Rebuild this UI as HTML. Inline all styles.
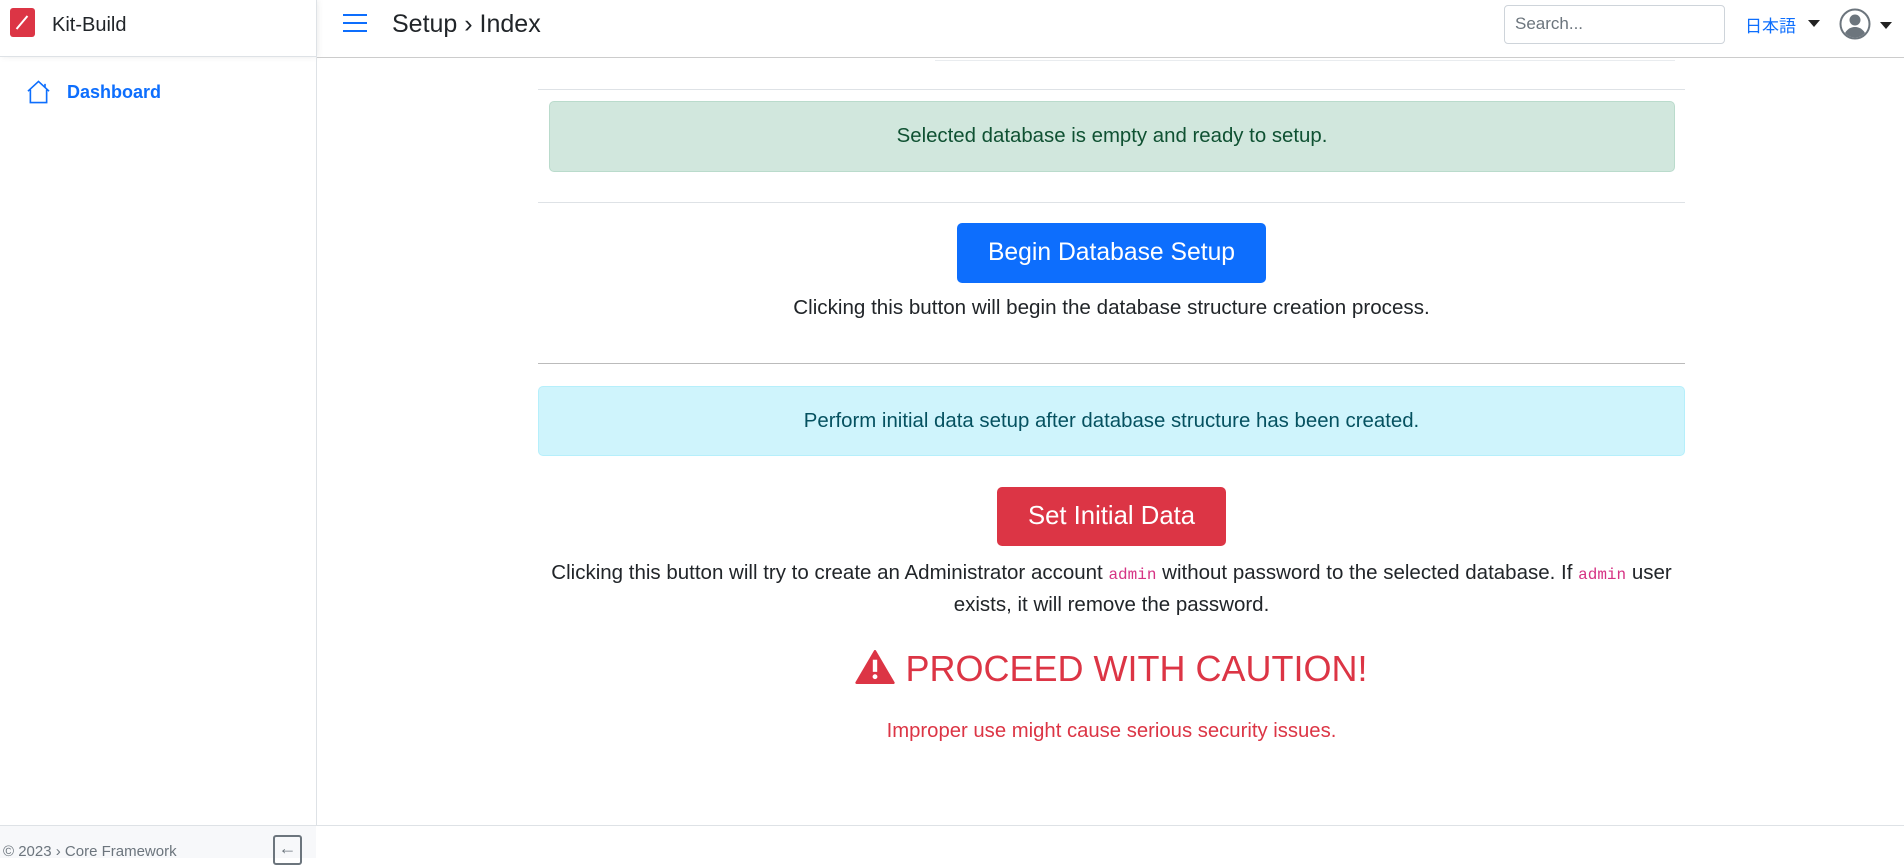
<!DOCTYPE html>
<html><head><meta charset="utf-8"><style>
*{box-sizing:border-box;margin:0;padding:0}
body{width:1904px;height:858px;overflow:hidden;background:#fff;font-family:"Liberation Sans","Noto Sans CJK JP",sans-serif;color:#212529;position:relative}
.a{position:absolute}
.c{text-align:center}
</style></head><body>
<!-- sidebar -->
<div class="a" style="left:0;top:0;width:316px;height:57px;border-bottom:1px solid #dee2e6;box-shadow:2px 0 6px rgba(0,0,0,.08)"></div>
<div class="a" style="left:10px;top:8px;width:25px;height:29px;background:#dc3545;border-radius:3px"></div>
<div class="a" style="left:21px;top:14px;width:2px;height:17px;background:#fff;transform:rotate(40deg)"></div>
<div class="a" style="left:52px;top:14px;font-size:20px">Kit-Build</div>
<div class="a" style="left:316px;top:0;width:1px;height:825px;background:#dee2e6"></div>
<svg class="a" style="left:25px;top:79px" width="27" height="26" viewBox="0 0 16 16" fill="none" stroke="#0d6efd" stroke-width="1"><path d="M1.5 7.5L8 1.5l6.5 6M3 6.5V14.5h10V6.5M12 3v2"/></svg>
<div class="a" style="left:67px;top:82px;font-size:18px;font-weight:bold;color:#0d6efd">Dashboard</div>
<div class="a" style="left:0;top:825px;width:316px;height:33px;background:#f7f8fa;border-top:1px solid #dee2e6"></div>
<div class="a" style="left:3px;top:843px;font-size:15px;color:#6c757d">© 2023 › Core Framework</div>
<div class="a" style="left:273px;top:835px;width:29px;height:30px;border:2px solid #6c757d;border-radius:3px;color:#6c757d;font-size:18px;line-height:22px;text-align:center">←</div>
<div class="a" style="left:316px;top:825px;width:1588px;height:1px;background:#dee2e6"></div>
<!-- header -->
<div class="a" style="left:317px;top:57px;width:1587px;height:1px;background:#ccc"></div>
<div class="a" style="left:343px;top:14px;width:24px;height:2px;background:#0d6efd;box-shadow:0 8px 0 #0d6efd,0 16px 0 #0d6efd"></div>
<div class="a" style="left:392px;top:10px;font-size:25px">Setup › Index</div>
<div class="a" style="left:1504px;top:5px;width:221px;height:39px;border:1px solid #ced4da;border-radius:4px;padding:8px 10px;font-size:17px;color:#6c757d">Search...</div>
<div class="a" style="left:1745px;top:12px;font-size:17px;color:#0d6efd">日本語</div>
<div class="a" style="left:1808px;top:20px;border:6px solid transparent;border-top:7px solid #222"></div>
<svg class="a" style="left:1839px;top:8px" width="32" height="32" viewBox="0 0 32 32"><circle cx="16" cy="16" r="14.5" fill="none" stroke="#6c757d" stroke-width="2"/><circle cx="16" cy="12" r="5.5" fill="#6c757d"/><path d="M6 25c3-5 7-6 10-6s7 1 10 6c-3 3-6 4.5-10 4.5S9 28 6 25z" fill="#6c757d"/></svg>
<div class="a" style="left:1880px;top:22px;border:6px solid transparent;border-top:7px solid #222"></div>
<!-- content -->
<div class="a" style="left:935px;top:57px;width:740px;height:4px;border-bottom:1px solid #e9ecef"></div>
<div class="a" style="left:538px;top:89px;width:1147px;height:1px;background:#dee2e6"></div>
<div class="a c" style="left:549px;top:101px;width:1126px;height:71px;background:#d1e7dd;border:1px solid #badbcc;border-radius:5px;line-height:69px;font-size:20.4px;color:#0f5132">Selected database is empty and ready to setup.</div>
<div class="a" style="left:538px;top:202px;width:1147px;height:1px;background:#dee2e6"></div>
<div class="a c" style="left:957px;top:223px;width:309px;height:60px;background:#0d6efd;border-radius:5px;color:#fff;font-size:24.7px;line-height:60px">Begin Database Setup</div>
<div class="a c" style="left:538px;top:296px;width:1147px;font-size:20.6px">Clicking this button will begin the database structure creation process.</div>
<div class="a" style="left:538px;top:363px;width:1147px;height:1px;background:#bbb"></div>
<div class="a c" style="left:538px;top:386px;width:1147px;height:70px;background:#cff4fc;border:1px solid #b6effb;border-radius:5px;line-height:68px;font-size:20.4px;color:#055160">Perform initial data setup after database structure has been created.</div>
<div class="a c" style="left:997px;top:487px;width:229px;height:59px;background:#dc3545;border-radius:5px;color:#fff;font-size:25.7px;line-height:59px">Set Initial Data</div>
<div class="a c" style="left:538px;top:558px;width:1147px;font-size:20.5px;line-height:29px">Clicking this button will try to create an Administrator account <code style="font-family:'Liberation Mono',monospace;color:#d63384;font-size:16px">admin</code> without password to the selected database. If <code style="font-family:'Liberation Mono',monospace;color:#d63384;font-size:16px">admin</code> user<br>exists, it will remove the password.</div>
<div class="a c" style="left:538px;top:648px;width:1147px;font-size:36px;color:#dc3545"><svg width="40" height="34" viewBox="0 0 16 14" style="vertical-align:-3px;margin-right:10px"><path d="M8 0.5L15.6 13.5H0.4z" fill="#dc3545" stroke="#dc3545" stroke-linejoin="round"/><rect x="7.1" y="4" width="1.8" height="5" fill="#fff"/><circle cx="8" cy="11" r="1" fill="#fff"/></svg>PROCEED WITH CAUTION!</div>
<div class="a c" style="left:538px;top:720px;width:1147px;font-size:20.3px;color:#dc3545">Improper use might cause serious security issues.</div>
</body></html>
